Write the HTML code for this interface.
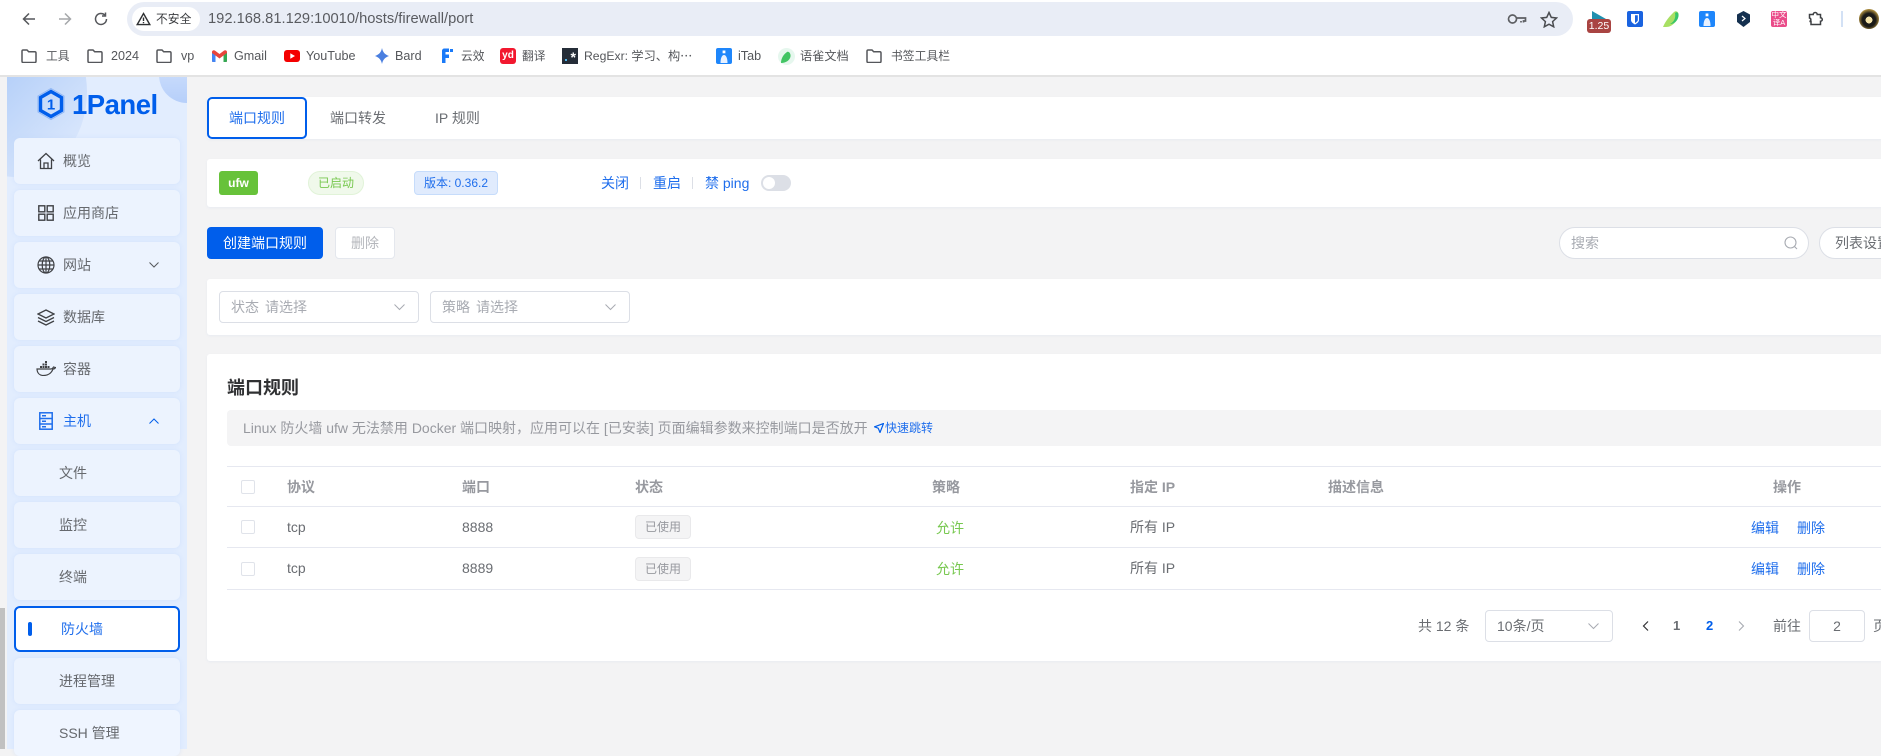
<!DOCTYPE html>
<html lang="zh"><head><meta charset="utf-8"><title>1Panel</title>
<style>
*{box-sizing:border-box}
html,body{margin:0;padding:0;width:1881px;height:749px;overflow:hidden;background:#f3f3f4;font-family:"Liberation Sans","Noto Sans CJK SC",sans-serif;font-size:14px;color:#6a6d72}
.a{position:absolute}
.t{position:absolute;line-height:20px;height:20px;white-space:nowrap}
svg{position:absolute;display:block}
.bm{font-size:11.8px;color:#55575b}
.bl{font-size:12.6px}
.m{position:absolute;left:14px;width:166px;height:46px;background:#ecf3fe;border-radius:6px;box-shadow:0 0 4px rgba(190,212,250,.45)}
.mt{position:absolute;line-height:20px;white-space:nowrap;color:#66696e;font-size:14px}
.card{position:absolute;left:207px;width:1674px;background:#fff;box-shadow:0 1px 2px rgba(225,230,240,.6);border-radius:3px 0 0 3px}
.b{color:#1f6eec}
.th{font-weight:bold;color:#97999f}
.hl{position:absolute;left:227px;width:1654px;height:1px;background:#e6e8f0}
.cb{position:absolute;left:241px;width:14px;height:14px;border:1px solid #e0e3ea;border-radius:2px;background:#fff}
.sel{position:absolute;background:#fff;border:1px solid #dcdfe6;border-radius:4px}
.tag{position:absolute;left:635px;width:56px;height:24px;background:#f4f4f5;border:1px solid #e9e9eb;border-radius:4px;font-size:12px;color:#97999f;text-align:center;line-height:22px}
</style></head><body>

<!-- browser chrome -->
<div class="a" style="left:0;top:0;width:1881px;height:76px;background:#fff;border-bottom:1px solid #e3e3e3"></div>
<div class="a" style="left:0;top:76px;width:1881px;height:1px;background:#e3e3e3"></div>
<svg style="left:21px;top:11px" width="16" height="16" viewBox="0 0 16 16" fill="none" stroke="#55575b" stroke-width="1.500"><path d="M14 8H2.500M8 2.500L2.500 8 8 13.500"/></svg>
<svg style="left:57px;top:11px" width="16" height="16" viewBox="0 0 16 16" fill="none" stroke="#a5a7aa" stroke-width="1.500"><path d="M2 8h11.500M8 2.500L13.500 8 8 13.500"/></svg>
<svg style="left:93px;top:11px" width="16" height="16" viewBox="0 0 16 16" fill="none" stroke="#55575b" stroke-width="1.500"><path d="M13.500 8a5.500 5.500 0 1 1-1.700-4M12.500 1.500V5H9"/></svg>
<div class="a" style="left:127px;top:2px;width:1446px;height:34px;background:#e9edf6;border-radius:17px"></div>
<div class="a" style="left:132px;top:7px;width:68px;height:24px;background:#fff;border-radius:12px"></div>
<svg style="left:136px;top:12px" width="15" height="14" viewBox="0 0 15 14" fill="none" stroke="#2f3133" stroke-width="1.400"><path d="M7.500 1.500L13.800 12.600H1.200Z"/><path d="M7.500 5.500v3.500M7.500 10v1.200"/></svg>
<span class="t" style="left:156px;top:9px;font-size:11.800px;color:#3b3d40">不安全</span>
<span class="t" style="left:208px;top:9px;font-size:14.700px;color:#595b60">192.168.81.129:10010/hosts/firewall/port</span>
<svg style="left:1507px;top:13px" width="20" height="12" viewBox="0 0 20 12" fill="none" stroke="#5d5f63" stroke-width="1.700"><circle cx="5.500" cy="6" r="4"/><path d="M9.500 5h9v3h-2v1.500M14 8v1.500"/></svg>
<svg style="left:1540px;top:11px" width="18" height="17" viewBox="0 0 18 17" fill="none" stroke="#4a4c50" stroke-width="1.500"><path d="M9 1.500l2.300 4.900 5.200.6-3.900 3.600 1.100 5.200L9 13.200l-4.700 2.600 1.100-5.200L1.500 7l5.200-.6z"/></svg>
<svg style="left:1591px;top:11px" width="16" height="10" viewBox="0 0 16 10"><path d="M1 0l14 8v2H1z" fill="#1f8fae"/></svg>
<div class="a" style="left:1587px;top:19px;width:24px;height:14px;background:#a94442;border-radius:3px;color:#fff;font-size:10.500px;line-height:14px;text-align:center">1.25</div>
<svg style="left:1627px;top:11px" width="16" height="16" viewBox="0 0 16 16"><rect width="16" height="16" rx="2" fill="#1a63e0"/><path d="M4 3h8v6c0 2-2 3.500-4 4.500C6 12.500 4 11 4 9z" fill="#fff"/><path d="M8 4.200h2.800V9c0 1.200-1.500 2.200-2.800 3z" fill="#1a63e0"/></svg>
<svg style="left:1663px;top:10px" width="16" height="18" viewBox="0 0 16 18"><path d="M0 17C3 10 7 6 11 2c2-2 5 0 4.500 3C15 10 10 17 3 17z" fill="#a8e063"/><path d="M7 14c4-2 6-6 5-11 2-2 4 0 3.500 3C15 10 12 14 7 14z" fill="#37c56a"/></svg>
<svg style="left:1699px;top:11px" width="16" height="16" viewBox="0 0 16 16"><rect width="16" height="16" rx="2" fill="#1e86fb"/><path d="M4.500 15C4.500 10 6 7 8 7s3.500 3 3.500 8z" fill="#e8f1ff"/><rect x="6.600" y="2.500" width="2.800" height="2.800" fill="#fff"/></svg>
<svg style="left:1737px;top:11px" width="13" height="16" viewBox="0 0 13 16"><path d="M6.500 0L13 3.500V11l-6.500 5L0 11V3.500z" fill="#14304f"/><path d="M5 5l3 2.500L5 10" fill="none" stroke="#fff" stroke-width="1.200"/></svg>
<div class="a" style="left:1771px;top:11px;width:16px;height:16px;background:#ea4c89;border-radius:2px;color:#fff;font-size:7.500px;line-height:8px;text-align:center;overflow:hidden">中文<br>译A</div>
<svg style="left:1808px;top:11px" width="16" height="16" viewBox="0 0 16 16" fill="none" stroke="#3f4144" stroke-width="1.500"><path d="M1.500 3.500h3.700a2 2 0 0 1 4 0h3.300v3.200a1.800 1.800 0 0 1 0 3.600v3.200H3v-3H1.500c1.800-.6 1.800-3 0-3.500z"/></svg>
<div class="a" style="left:1841px;top:11px;width:2px;height:16px;background:#d3e1f5"></div>
<div class="a" style="left:1859px;top:9px;width:20px;height:20px;border-radius:50%;background:radial-gradient(circle at 50% 55%,#f4e3a8 0 22%,#1b1a17 24% 45%,#a98a3c 70%,#524318 100%)"></div>

<!-- bookmarks -->
<svg width="0" height="0" style="position:absolute"><defs><symbol id="fd" viewBox="0 0 16 14"><path d="M1 12.300V2.200C1 1.500 1.500 1 2.200 1h3.800l1.700 1.800h6.100c.7 0 1.200.5 1.200 1.200v8.300c0 .7-.5 1.200-1.200 1.200H2.200C1.500 13.500 1 13 1 12.300z" fill="none" stroke="#55575b" stroke-width="1.500"/></symbol></defs></svg>
<svg style="left:21px;top:49px" width="16" height="14"><use href="#fd"/></svg>
<span class="t bm" style="left:46px;top:46px">工具</span>
<svg style="left:87px;top:49px" width="16" height="14"><use href="#fd"/></svg>
<span class="t bm bl" style="left:111px;top:46px">2024</span>
<svg style="left:156px;top:49px" width="16" height="14"><use href="#fd"/></svg>
<span class="t bm bl" style="left:181px;top:46px">vp</span>
<svg style="left:212px;top:50px" width="15" height="12" viewBox="0 0 15 12"><path d="M0 2v9c0 .6.400 1 1 1h2.500V5.500L7.500 8.500l4-3V12H14c.6 0 1-.4 1-1V2c0-1.500-1.700-2.300-3-1.400L7.500 4 3 .6C1.700-.3 0 .5 0 2z" fill="#e8453c"/><path d="M0 2v9c0 .6.400 1 1 1h2.500V5.500L0 3z" fill="#4285f4"/><path d="M11.500 5.500V12H14c.6 0 1-.4 1-1V3z" fill="#34a853"/></svg>
<span class="t bm bl" style="left:234px;top:46px">Gmail</span>
<svg style="left:284px;top:50px" width="16" height="12" viewBox="0 0 16 12"><rect width="16" height="12" rx="3" fill="#f40000"/><path d="M6.300 3.300v5.400L11 6z" fill="#fff"/></svg>
<span class="t bm bl" style="left:306px;top:46px">YouTube</span>
<svg style="left:375px;top:48px" width="14" height="16" viewBox="0 0 14 16"><path d="M7 0c.8 4 2.700 6.500 7 8-4.300 1.500-6.200 4-7 8-.8-4-2.700-6.500-7-8 4.300-1.500 6.200-4 7-8z" fill="#4a7fe0"/></svg>
<span class="t bm bl" style="left:395px;top:46px">Bard</span>
<svg style="left:441px;top:48px" width="12" height="16" viewBox="0 0 12 16"><path d="M1 3c0-1.500 1-2.500 2.500-2.500H8V4H4.500v2.500H8V10H4.500v5H1z" fill="#1a7af8"/><rect x="9" y="1" width="3" height="3" fill="#1a7af8"/></svg>
<span class="t bm" style="left:461px;top:46px">云效</span>
<div class="a" style="left:500px;top:48px;width:16px;height:16px;background:#f2182f;border-radius:3px;color:#fff;font-size:10px;font-weight:bold;line-height:16px;text-align:center">yd</div>
<span class="t bm" style="left:522px;top:46px">翻译</span>
<div class="a" style="left:562px;top:48px;width:16px;height:16px;background:#252d38;color:#fff;font-size:14px;font-weight:bold;line-height:19px;text-align:right;padding-right:2px">*</div>
<div class="a" style="left:565px;top:59px;width:2px;height:2px;background:#52b4e8"></div>
<span class="t bm" style="left:584px;top:46px;font-size:12.200px">RegExr: 学习、构⋯</span>
<svg style="left:716px;top:48px" width="16" height="16" viewBox="0 0 16 16"><rect width="16" height="16" rx="2" fill="#1e86fb"/><path d="M4.500 15C4.500 10 6 7 8 7s3.500 3 3.500 8z" fill="#e8f1ff"/><rect x="6.600" y="2.500" width="2.800" height="2.800" fill="#fff"/></svg>
<span class="t bm bl" style="left:738px;top:46px">iTab</span>
<svg style="left:778px;top:48px" width="17" height="17" viewBox="0 0 17 17"><circle cx="8.500" cy="8.500" r="8.500" fill="#e6f7ee"/><path d="M3 15c0-5 3-9 6-11 2-1 4 2 3.500 4.500C12 12 8 15 3 15z" fill="#41c463"/></svg>
<span class="t bm" style="left:800px;top:46px;font-size:12.200px">语雀文档</span>
<svg style="left:866px;top:49px" width="16" height="14"><use href="#fd"/></svg>
<span class="t bm" style="left:891px;top:46px">书签工具栏</span>

<!-- left strip & scrollbar -->
<div class="a" style="left:0;top:608px;width:5px;height:141px;background:#c1c1c1"></div>

<!-- sidebar -->
<div class="a" style="left:7px;top:77px;width:180px;height:672px;background:#e2edfe;overflow:hidden">
  <div class="a" style="left:-62px;top:-70px;width:142px;height:170px;border-radius:50%;background:linear-gradient(135deg,#a9c8f7 25%,#e0ebfd 95%)"></div>
  <div class="a" style="left:152px;top:-30px;width:56px;height:56px;border-radius:50%;background:linear-gradient(180deg,#d8e6fd,#b6cffa)"></div>
</div>
<svg style="left:36px;top:87px" width="30" height="34" viewBox="0 0 30 34"><path d="M15 1.500L28 9v16l-13 7.500L2 25V9z" fill="none" stroke="#8fb6f5" stroke-width="1"/><path d="M15 4.500L25.500 10.500v13L15 29.500 4.500 23.500v-13z" fill="none" stroke="#005eeb" stroke-width="3.400"/><text x="15" y="22.500" text-anchor="middle" font-family="Liberation Sans" font-weight="bold" font-size="15" fill="#005eeb">1</text></svg>
<span class="t" style="left:72px;top:90px;height:30px;line-height:30px;font-size:27.500px;font-weight:bold;color:#005eeb;letter-spacing:-.5px">1Panel</span>

<div class="m" style="top:138px"></div><span class="mt" style="left:63px;top:151px">概览</span>
<div class="m" style="top:190px"></div><span class="mt" style="left:63px;top:203px">应用商店</span>
<div class="m" style="top:242px"></div><span class="mt" style="left:63px;top:255px">网站</span>
<div class="m" style="top:294px"></div><span class="mt" style="left:63px;top:307px">数据库</span>
<div class="m" style="top:346px"></div><span class="mt" style="left:63px;top:359px">容器</span>
<div class="m" style="top:398px"></div><span class="mt" style="left:63px;top:411px;color:#1f6eec">主机</span>
<div class="m" style="top:450px"></div><span class="mt" style="left:59px;top:463px">文件</span>
<div class="m" style="top:502px"></div><span class="mt" style="left:59px;top:515px">监控</span>
<div class="m" style="top:554px"></div><span class="mt" style="left:59px;top:567px">终端</span>
<div class="m" style="top:606px;background:#fff;border:2px solid #005eeb;box-shadow:none"></div>
<div class="a" style="left:28px;top:622px;width:4px;height:14px;border-radius:2px;background:#005eeb"></div>
<span class="mt" style="left:61px;top:619px;color:#1f6eec">防火墙</span>
<div class="m" style="top:658px"></div><span class="mt" style="left:59px;top:671px">进程管理</span>
<div class="m" style="top:710px;background:#eff5ff"></div><span class="mt" style="left:59px;top:723px">SSH 管理</span>

<svg style="left:37px;top:152px" width="18" height="18" viewBox="0 0 18 18" fill="none" stroke="#3f4145" stroke-width="1.300"><path d="M1 9L9 1.500 17 9M3.500 7.500V16.500h11V7.500M7 16.500v-5.500h4v5.500"/></svg>
<svg style="left:38px;top:205px" width="16" height="16" viewBox="0 0 16 16" fill="none" stroke="#3f4145" stroke-width="1.400"><rect x=".8" y=".8" width="6" height="6"/><rect x="9.200" y=".8" width="6" height="6"/><rect x=".8" y="9.200" width="6" height="6"/><rect x="9.200" y="9.200" width="6" height="6"/></svg>
<svg style="left:37px;top:256px" width="18" height="18" viewBox="0 0 18 18" fill="none" stroke="#3f4145" stroke-width="1.200"><circle cx="9" cy="9" r="8"/><ellipse cx="9" cy="9" rx="3.800" ry="8"/><path d="M9 1v16M1 9h16M2.200 5h13.600M2.200 13h13.600"/></svg>
<svg style="left:37px;top:309px" width="18" height="17" viewBox="0 0 18 17" fill="none" stroke="#3f4145" stroke-width="1.300"><path d="M9 1l8 4-8 4-8-4zM1 8.500l8 4 8-4M1 12l8 4 8-4"/></svg>
<svg style="left:36px;top:361px" width="20" height="15" viewBox="0 0 20 15"><path d="M1 8h14c1 0 2-1 2.500-2 .7.300 1.500.300 2 .5-.5 1-1.500 1.500-2.500 1.500C15.500 12 12 14.500 7.500 14.500 3.500 14.500 1.200 12 1 8z" fill="none" stroke="#3f4145" stroke-width="1.200"/><path d="M4 5h2v2H4zM6.500 5h2v2h-2zM9 5h2v2H9zM6.500 2.500h2v2h-2zM9 2.500h2v2H9zM9 0h2v2H9zM11.500 5h2v2h-2z" fill="#3f4145"/></svg>
<svg style="left:39px;top:412px" width="14" height="18" viewBox="0 0 14 18" fill="none" stroke="#1f6eec" stroke-width="1.500"><rect x=".8" y=".8" width="12.400" height="16.400"/><path d="M.8 6.500h12.400M.8 12h12.400M3 3.700h4M3 9.200h4M3 14.800h4"/></svg>
<svg style="left:149px;top:262px" width="10" height="6" viewBox="0 0 10 6" fill="none" stroke="#55585c" stroke-width="1"><path d="M.5.500L5 5 9.500.5"/></svg>
<svg style="left:149px;top:418px" width="10" height="6" viewBox="0 0 10 6" fill="none" stroke="#005eeb" stroke-width="1"><path d="M.5 5.500L5 1l4.500 4.500"/></svg>

<!-- tabs card -->
<div class="card" style="top:97px;height:42px"></div>
<div class="a" style="left:207px;top:97px;width:100px;height:42px;border:2px solid #005eeb;border-radius:5px;background:#fff"></div>
<span class="t b" style="left:229px;top:108px">端口规则</span>
<span class="t" style="left:330px;top:108px">端口转发</span>
<span class="t" style="left:435px;top:108px">IP 规则</span>

<!-- status card -->
<div class="card" style="top:159px;height:48px"></div>
<div class="a" style="left:219px;top:171px;width:39px;height:24px;background:#67c23a;border-radius:3px;color:#fff;font-size:12px;font-weight:bold;text-align:center;line-height:24px">ufw</div>
<div class="a" style="left:308px;top:171px;width:56px;height:24px;background:#f0f9eb;border:1px solid #e1f3d8;border-radius:12px;color:#78c850;font-size:12px;text-align:center;line-height:22px">已启动</div>
<div class="a" style="left:414px;top:171px;width:84px;height:24px;background:#e0ebfd;border:1px solid #c6dcfb;border-radius:4px;color:#1f6eec;font-size:12px;text-align:center;line-height:22px">版本: 0.36.2</div>
<span class="t b" style="left:601px;top:173px">关闭</span>
<div class="a" style="left:640px;top:177px;width:1px;height:12px;background:#dcdfe6"></div>
<span class="t b" style="left:653px;top:173px">重启</span>
<div class="a" style="left:692px;top:177px;width:1px;height:12px;background:#dcdfe6"></div>
<span class="t b" style="left:705px;top:173px">禁 ping</span>
<div class="a" style="left:761px;top:175px;width:30px;height:16px;background:#dcdfe6;border-radius:8px"></div>
<div class="a" style="left:763px;top:177px;width:12px;height:12px;background:#fff;border-radius:50%"></div>

<!-- buttons -->
<div class="a" style="left:207px;top:227px;width:116px;height:32px;background:#005eeb;border-radius:4px;color:#fff;text-align:center;line-height:32px">创建端口规则</div>
<div class="a" style="left:335px;top:227px;width:60px;height:32px;background:#fff;border:1px solid #e4e7ed;border-radius:4px;color:#b5b7bc;text-align:center;line-height:30px">删除</div>
<div class="a" style="left:1559px;top:227px;width:250px;height:32px;background:#fff;border:1px solid #dcdfe6;border-radius:16px"></div>
<span class="t" style="left:1571px;top:233px;color:#a8abb2">搜索</span>
<svg style="left:1784px;top:236px" width="14" height="14" viewBox="0 0 14 14" fill="none" stroke="#a8abb2" stroke-width="1.100"><circle cx="6.500" cy="6.500" r="5.500"/><path d="M10.500 10.500L13 13"/></svg>
<div class="a" style="left:1819px;top:227px;width:90px;height:32px;background:#fff;border:1px solid #dcdfe6;border-radius:16px"></div>
<span class="t" style="left:1835px;top:233px">列表设置</span>

<!-- filter card -->
<div class="card" style="top:279px;height:56px"></div>
<div class="sel" style="left:219px;top:291px;width:200px;height:32px"></div>
<span class="t" style="left:231px;top:297px;color:#a8abb2">状态</span>
<span class="t" style="left:265px;top:297px;color:#a8abb2">请选择</span>
<svg style="left:394px;top:304px" width="11" height="7" viewBox="0 0 11 7" fill="none" stroke="#a8abb2" stroke-width="1"><path d="M.5.500l5 5 5-5"/></svg>
<div class="sel" style="left:430px;top:291px;width:200px;height:32px"></div>
<span class="t" style="left:442px;top:297px;color:#a8abb2">策略</span>
<span class="t" style="left:476px;top:297px;color:#a8abb2">请选择</span>
<svg style="left:605px;top:304px" width="11" height="7" viewBox="0 0 11 7" fill="none" stroke="#a8abb2" stroke-width="1"><path d="M.5.500l5 5 5-5"/></svg>

<!-- main card -->
<div class="card" style="top:354px;height:307px"></div>
<span class="t" style="left:227px;top:378px;font-size:18px;font-weight:bold;color:#303133">端口规则</span>
<div class="a" style="left:227px;top:410px;width:1654px;height:36px;background:#f4f4f5;border-radius:4px 0 0 4px"></div>
<span class="t" style="left:243px;top:418px;font-size:14px;color:#97999f">Linux 防火墙 ufw 无法禁用 Docker 端口映射，应用可以在 [已安装] 页面编辑参数来控制端口是否放开</span>
<svg style="left:874px;top:423px" width="10" height="10" viewBox="0 0 10 10"><path d="M9.500.500L.500 3.800l3.700 1.400L6 9.500z" fill="none" stroke="#005eeb" stroke-width="1.200"/></svg>
<span class="t b" style="left:885px;top:418px;font-size:12px">快速跳转</span>

<div class="hl" style="top:466px"></div>
<div class="hl" style="top:506px"></div>
<div class="hl" style="top:547px"></div>
<div class="hl" style="top:589px"></div>
<div class="cb" style="top:480px"></div>
<div class="cb" style="top:520px"></div>
<div class="cb" style="top:562px"></div>
<span class="t th" style="left:287px;top:477px">协议</span>
<span class="t th" style="left:462px;top:477px">端口</span>
<span class="t th" style="left:635px;top:477px">状态</span>
<span class="t th" style="left:932px;top:477px">策略</span>
<span class="t th" style="left:1130px;top:477px">指定 IP</span>
<span class="t th" style="left:1328px;top:477px">描述信息</span>
<span class="t th" style="left:1773px;top:477px">操作</span>

<span class="t" style="left:287px;top:517px">tcp</span>
<span class="t" style="left:462px;top:517px">8888</span>
<div class="tag" style="top:515px">已使用</div>
<span class="t" style="left:936px;top:518px;color:#78c850">允许</span>
<span class="t" style="left:1130px;top:517px">所有 IP</span>
<span class="t b" style="left:1751px;top:518px">编辑</span>
<span class="t b" style="left:1797px;top:518px">删除</span>

<span class="t" style="left:287px;top:558px">tcp</span>
<span class="t" style="left:462px;top:558px">8889</span>
<div class="tag" style="top:557px">已使用</div>
<span class="t" style="left:936px;top:559px;color:#78c850">允许</span>
<span class="t" style="left:1130px;top:558px">所有 IP</span>
<span class="t b" style="left:1751px;top:559px">编辑</span>
<span class="t b" style="left:1797px;top:559px">删除</span>

<!-- pagination -->
<span class="t" style="left:1418px;top:616px">共 12 条</span>
<div class="sel" style="left:1485px;top:610px;width:128px;height:32px"></div>
<span class="t" style="left:1497px;top:616px">10条/页</span>
<svg style="left:1588px;top:623px" width="11" height="7" viewBox="0 0 11 7" fill="none" stroke="#a8abb2" stroke-width="1"><path d="M.5.500l5 5 5-5"/></svg>
<svg style="left:1642px;top:621px" width="7" height="10" viewBox="0 0 7 10" fill="none" stroke="#303133" stroke-width="1.200"><path d="M6 .5L1.500 5 6 9.500"/></svg>
<span class="t" style="left:1673px;top:616px;font-weight:bold;font-size:13px">1</span>
<span class="t" style="left:1706px;top:616px;font-weight:bold;font-size:13px;color:#005eeb">2</span>
<svg style="left:1738px;top:621px" width="7" height="10" viewBox="0 0 7 10" fill="none" stroke="#a8abb2" stroke-width="1.100"><path d="M1 .5L5.500 5 1 9.500"/></svg>
<span class="t" style="left:1773px;top:616px">前往</span>
<div class="sel" style="left:1809px;top:610px;width:56px;height:32px;text-align:center;line-height:30px">2</div>
<span class="t" style="left:1873px;top:616px">页</span>
</body></html>
